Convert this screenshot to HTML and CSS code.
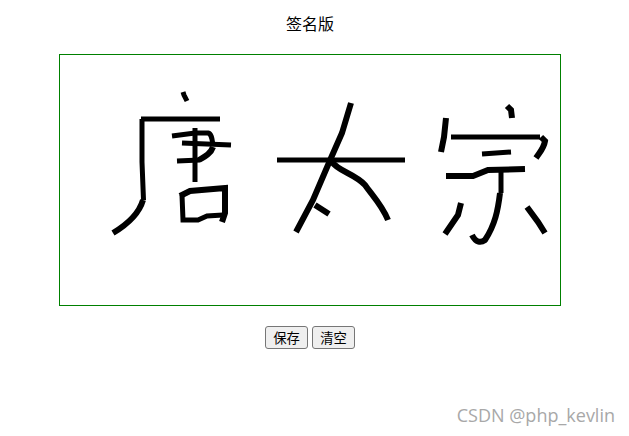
FILE: index.html
```html
<!DOCTYPE html>
<html lang="en">
<head>
  <meta charset="UTF-8" />
  <meta name="viewport" content="width=device-width, initial-scale=1.0"/>
  <title>签名版</title>
  <link rel="stylesheet" href="styles.css">
</head>
<body>

  <div class="page">
    <div class="title">签名版</div>

    <svg class="board" viewBox="60 55 500 250" xmlns="http://www.w3.org/2000/svg">
      <g class="ink">
        <!-- 唐 -->
        <path d="M183 92L184 95L187 101"/>
        <path d="M141 119H220"/>
        <path d="M142 119V162L143.500 200"/>
        <path class="rough" d="M143 200C139 214 128 224 113 233"/>
        <path d="M172 136L195 133H208C212 134 212 140 213 145"/>
        <path class="rough" d="M213 147C211 153 206 156 199 160"/>
        <path d="M182 143L231 145"/>
        <path d="M177 161L200 160"/>
        <path d="M195 128V182"/>
        <path class="rough" d="M180 196L190 191L225 188V213L222 222"/>
        <path d="M182 195L183 220H198L207 216L223 215"/>
        <!-- 太 -->
        <path d="M277 160H405"/>
        <path class="rough" d="M351 103L342 133L331 158L313 200L296 232"/>
        <path class="rough" d="M332 162C338 171 355 174 365 185C372 195 382 205 388 220"/>
        <path class="rough" d="M315 205L329 214"/>
        <!-- 宋 -->
        <path class="rough" d="M507 106L511 110L512 118"/>
        <path class="rough" d="M446 118L444 137L441 152"/>
        <path d="M451 137H540"/>
        <path class="rough" d="M541 137L545 141C544 148 540 152 536 158"/>
        <path d="M482 154L511 152"/>
        <path class="rough" d="M446 176H473L488 170L525 169"/>
        <path d="M501 170V193"/>
        <path class="rough" d="M500 193C498 210 495 225 485 240C481 243 476 243 472 235"/>
        <path class="rough" d="M461 203L458 215L445 234"/>
        <path class="rough" d="M527 207L538 222L545 233"/>
      </g>
    </svg>

    <div class="buttons">
      <button>保存</button>
      <button>清空</button>
    </div>
  </div>

  <div class="watermark">CSDN @php_kevlin</div>

</body>
</html>
```

FILE: styles.css
```css
html, body {
  height: 100%;
}

body {
  margin: 0;
  background: #fff;
  color: #000;
  font-family: "Liberation Sans", "Noto Sans CJK SC", sans-serif;
  overflow: hidden;
}

.page {
  width: 620px;
  padding-top: 15px;
  display: flex;
  flex-direction: column;
  align-items: center;
}

.title {
  font-size: 16px;
  line-height: 19px;
  margin-bottom: 20px;
}

.board {
  display: block;
  width: 500px;
  height: 250px;
  border: 1px solid #008000;
}

.ink path {
  fill: none;
  stroke: #000;
  stroke-width: 5;
  stroke-linejoin: miter;
}

.ink .rough {
  stroke-width: 6;
}

.buttons {
  display: flex;
  gap: 4px;
  margin-top: 20px;
}

button {
  width: 43px;
  height: 23px;
  padding: 0;
  font-family: inherit;
  font-size: 13.33px;
  color: #000;
  background: #efefef;
  border: 1px solid #767676;
  border-radius: 3px;
}

.watermark {
  position: absolute;
  right: 14px;
  top: 403px;
  font-family: "Open Sans", sans-serif;
  font-size: 18px;
  line-height: 24px;
  color: #a8a8a8;
}
```
